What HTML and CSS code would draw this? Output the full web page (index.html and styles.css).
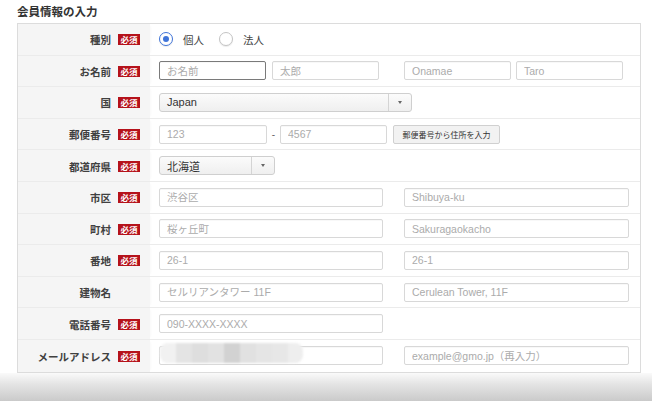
FILE: index.html
```html
<!DOCTYPE html>
<html lang="ja">
<head>
<meta charset="utf-8">
<link rel="stylesheet" href="styles.css">
</head>
<body>
<h2 class="title">会員情報の入力</h2>
<div class="table">
  <div class="row">
    <div class="label"><span>種別</span><span class="req">必須</span></div>
    <div class="field">
      <span class="radio on"></span><span class="rtext">個人</span>
      <span class="radio"></span><span class="rtext">法人</span>
    </div>
  </div>
  <div class="row">
    <div class="label"><span>お名前</span><span class="req">必須</span></div>
    <div class="field">
      <input class="in w107 focus" placeholder="お名前">
      <input class="in w107 g6" placeholder="太郎">
      <input class="in w107 g25" placeholder="Onamae">
      <input class="in w107 g5" placeholder="Taro">
    </div>
  </div>
  <div class="row">
    <div class="label"><span>国</span><span class="req">必須</span></div>
    <div class="field">
      <div class="select w253"><span class="sval">Japan</span><span class="sarrow"></span></div>
    </div>
  </div>
  <div class="row">
    <div class="label"><span>郵便番号</span><span class="req">必須</span></div>
    <div class="field">
      <input class="in w108" placeholder="123">
      <span class="dash">-</span>
      <input class="in w107" placeholder="4567">
      <button class="btn">郵便番号から住所を入力</button>
    </div>
  </div>
  <div class="row">
    <div class="label"><span>都道府県</span><span class="req">必須</span></div>
    <div class="field">
      <div class="select w116"><span class="sval">北海道</span><span class="sarrow"></span></div>
    </div>
  </div>
  <div class="row">
    <div class="label"><span>市区</span><span class="req">必須</span></div>
    <div class="field">
      <input class="in w224" placeholder="渋谷区">
      <input class="in w225 g21" placeholder="Shibuya-ku">
    </div>
  </div>
  <div class="row">
    <div class="label"><span>町村</span><span class="req">必須</span></div>
    <div class="field">
      <input class="in w224" placeholder="桜ヶ丘町">
      <input class="in w225 g21" placeholder="Sakuragaokacho">
    </div>
  </div>
  <div class="row">
    <div class="label"><span>番地</span><span class="req">必須</span></div>
    <div class="field">
      <input class="in w224" placeholder="26-1">
      <input class="in w225 g21" placeholder="26-1">
    </div>
  </div>
  <div class="row">
    <div class="label"><span>建物名</span><span class="req-space"></span></div>
    <div class="field">
      <input class="in w224" placeholder="セルリアンタワー 11F">
      <input class="in w225 g21" placeholder="Cerulean Tower, 11F">
    </div>
  </div>
  <div class="row">
    <div class="label"><span>電話番号</span><span class="req">必須</span></div>
    <div class="field">
      <input class="in w224" placeholder="090-XXXX-XXXX">
    </div>
  </div>
  <div class="row last">
    <div class="label"><span>メールアドレス</span><span class="req">必須</span></div>
    <div class="field">
      <div class="mailwrap">
        <input class="in w224">
        <div class="mosaic">
          <span class="m0"></span><span class="m1"></span><span class="m2"></span><span class="m3"></span><span class="m4"></span><span class="m5"></span><span class="m6"></span><span class="m7"></span><span class="m8"></span>
        </div>
      </div>
      <input class="in w225 g21" placeholder="example@gmo.jp（再入力）">
    </div>
  </div>
</div>
<div class="fade"></div>
</body>
</html>
```

FILE: styles.css
```css
html, body {
  margin: 0;
  padding: 0;
  background: #ffffff;
  overflow: hidden;
}
body {
  width: 652px;
  height: 401px;
  font-family: "Liberation Sans", "Noto Sans CJK JP", sans-serif;
  color: #333;
}
.title {
  margin: 0;
  height: 23px;
  line-height: 22px;
  padding-left: 17px;
  font-size: 11.5px;
  font-weight: bold;
  color: #333;
  font-family: "Noto Sans CJK JP", sans-serif;
}
.table {
  margin-left: 17px;
  width: 624px;
  box-sizing: border-box;
  border: 1px solid #dcdcdc;
  background: #fff;
}
.row {
  display: flex;
  height: 31.6px;
  box-sizing: border-box;
  border-bottom: 1px solid #ebebeb;
}
.row.last {
  border-bottom: none;
}
.label {
  width: 132px;
  flex: none;
  background: #f5f5f5;
  display: flex;
  align-items: center;
  justify-content: flex-end;
  padding-right: 10px;
  padding-top: 1px;
  box-sizing: border-box;
  font-family: "Noto Sans CJK JP", sans-serif;
  font-size: 10.5px;
  font-weight: bold;
  color: #404040;
  box-shadow: 2px 0 3px -2px rgba(0,0,0,0.05);
}
.req {
  margin-left: 7px;
  width: 22px;
  height: 11px;
  background: #b5121b;
  color: #fff;
  font-size: 8.5px;
  line-height: 11px;
  text-align: center;
  font-weight: bold;
}
.req-space {
  width: 22px;
  margin-left: 7px;
}
.field {
  flex: 1;
  display: flex;
  align-items: center;
  padding-left: 9px;
}
.in {
  box-sizing: border-box;
  height: 19px;
  border: 1px solid #d8d8d8;
  border-radius: 2px;
  padding: 0 0 0 7px;
  margin: 0;
  font-family: "Liberation Sans", "Noto Sans CJK JP", sans-serif;
  font-size: 10.5px;
  color: #333;
  background: #fff;
  box-shadow: inset 0 1px 1px rgba(0,0,0,0.03);
  outline: none;
}
.in::placeholder {
  color: #ababab;
}
.in.focus {
  border-color: #7a7a7a;
}
.w107 { width: 107px; }
.w108 { width: 108px; }
.w224 { width: 224px; }
.w225 { width: 225px; }
.g5 { margin-left: 5px; }
.g6 { margin-left: 6px; }
.g21 { margin-left: 21px; }
.g25 { margin-left: 25px; }
.radio {
  width: 14px;
  height: 14px;
  box-sizing: border-box;
  border-radius: 50%;
  border: 1px solid #c4c4c4;
  background: #fff;
  box-shadow: 0 1px 1px rgba(0,0,0,0.08);
  position: relative;
  flex: none;
}
.radio.on {
  border: 1.5px solid #3f74d9;
}
.radio.on::after {
  content: "";
  position: absolute;
  left: 50%;
  top: 50%;
  width: 6px;
  height: 6px;
  margin: -3px 0 0 -3px;
  border-radius: 50%;
  background: #3f74d9;
}
.rtext {
  font-family: "Noto Sans CJK JP", sans-serif;
  font-size: 10.5px;
  color: #444;
  margin-left: 10px;
  margin-right: 15px;
}
.select {
  box-sizing: border-box;
  height: 19px;
  border: 1px solid #cfcfcf;
  border-radius: 3px;
  background: linear-gradient(#fbfbfb, #efefef);
  display: flex;
  align-items: center;
}
.w253 { width: 253px; }
.w116 { width: 116px; }
.sval {
  flex: 1;
  padding-left: 7px;
  font-size: 11px;
  color: #333;
  font-family: "Liberation Sans", "Noto Sans CJK JP", sans-serif;
}
.sarrow {
  width: 23px;
  height: 100%;
  border-left: 1px solid #d4d4d4;
  position: relative;
  box-sizing: border-box;
}
.sarrow::after {
  content: "";
  position: absolute;
  left: 9px;
  top: 7px;
  border-left: 2.5px solid transparent;
  border-right: 2.5px solid transparent;
  border-top: 3px solid #666;
}
.dash {
  width: 13px;
  text-align: center;
  font-size: 10px;
  color: #666;
}
.btn {
  margin-left: 6px;
  width: 107px;
  height: 19px;
  box-sizing: border-box;
  border: 1px solid #d0d0d0;
  border-radius: 2px;
  background: #f2f2f2;
  font-family: "Noto Sans CJK JP", sans-serif;
  font-size: 8px;
  color: #333;
  padding: 0;
}
.mailwrap {
  position: relative;
  display: flex;
}
.mosaic {
  position: absolute;
  left: 1px;
  top: -3px;
  height: 20px;
  display: flex;
  filter: blur(1px);
}
.mosaic span {
  display: block;
  width: 16px;
  height: 20px;
}
.mosaic .m0 { background: #f1f1f1; border-radius: 8px 0 0 8px; }
.mosaic .m1 { background: #e4e4e4; }
.mosaic .m2 { background: #dedede; }
.mosaic .m3 { background: #e2e2e2; }
.mosaic .m4 { background: #d2d2d2; }
.mosaic .m5 { background: #e1e1e1; }
.mosaic .m6 { background: #e5e5e5; }
.mosaic .m7 { background: #e7e7e7; }
.mosaic .m8 { background: #eeeeee; width: 15px; border-radius: 0 8px 8px 0; }
.fade {
  height: 28px;
  background: linear-gradient(#fafafa 0%, #e4e4e4 40%, #cacaca 100%);
}
```
